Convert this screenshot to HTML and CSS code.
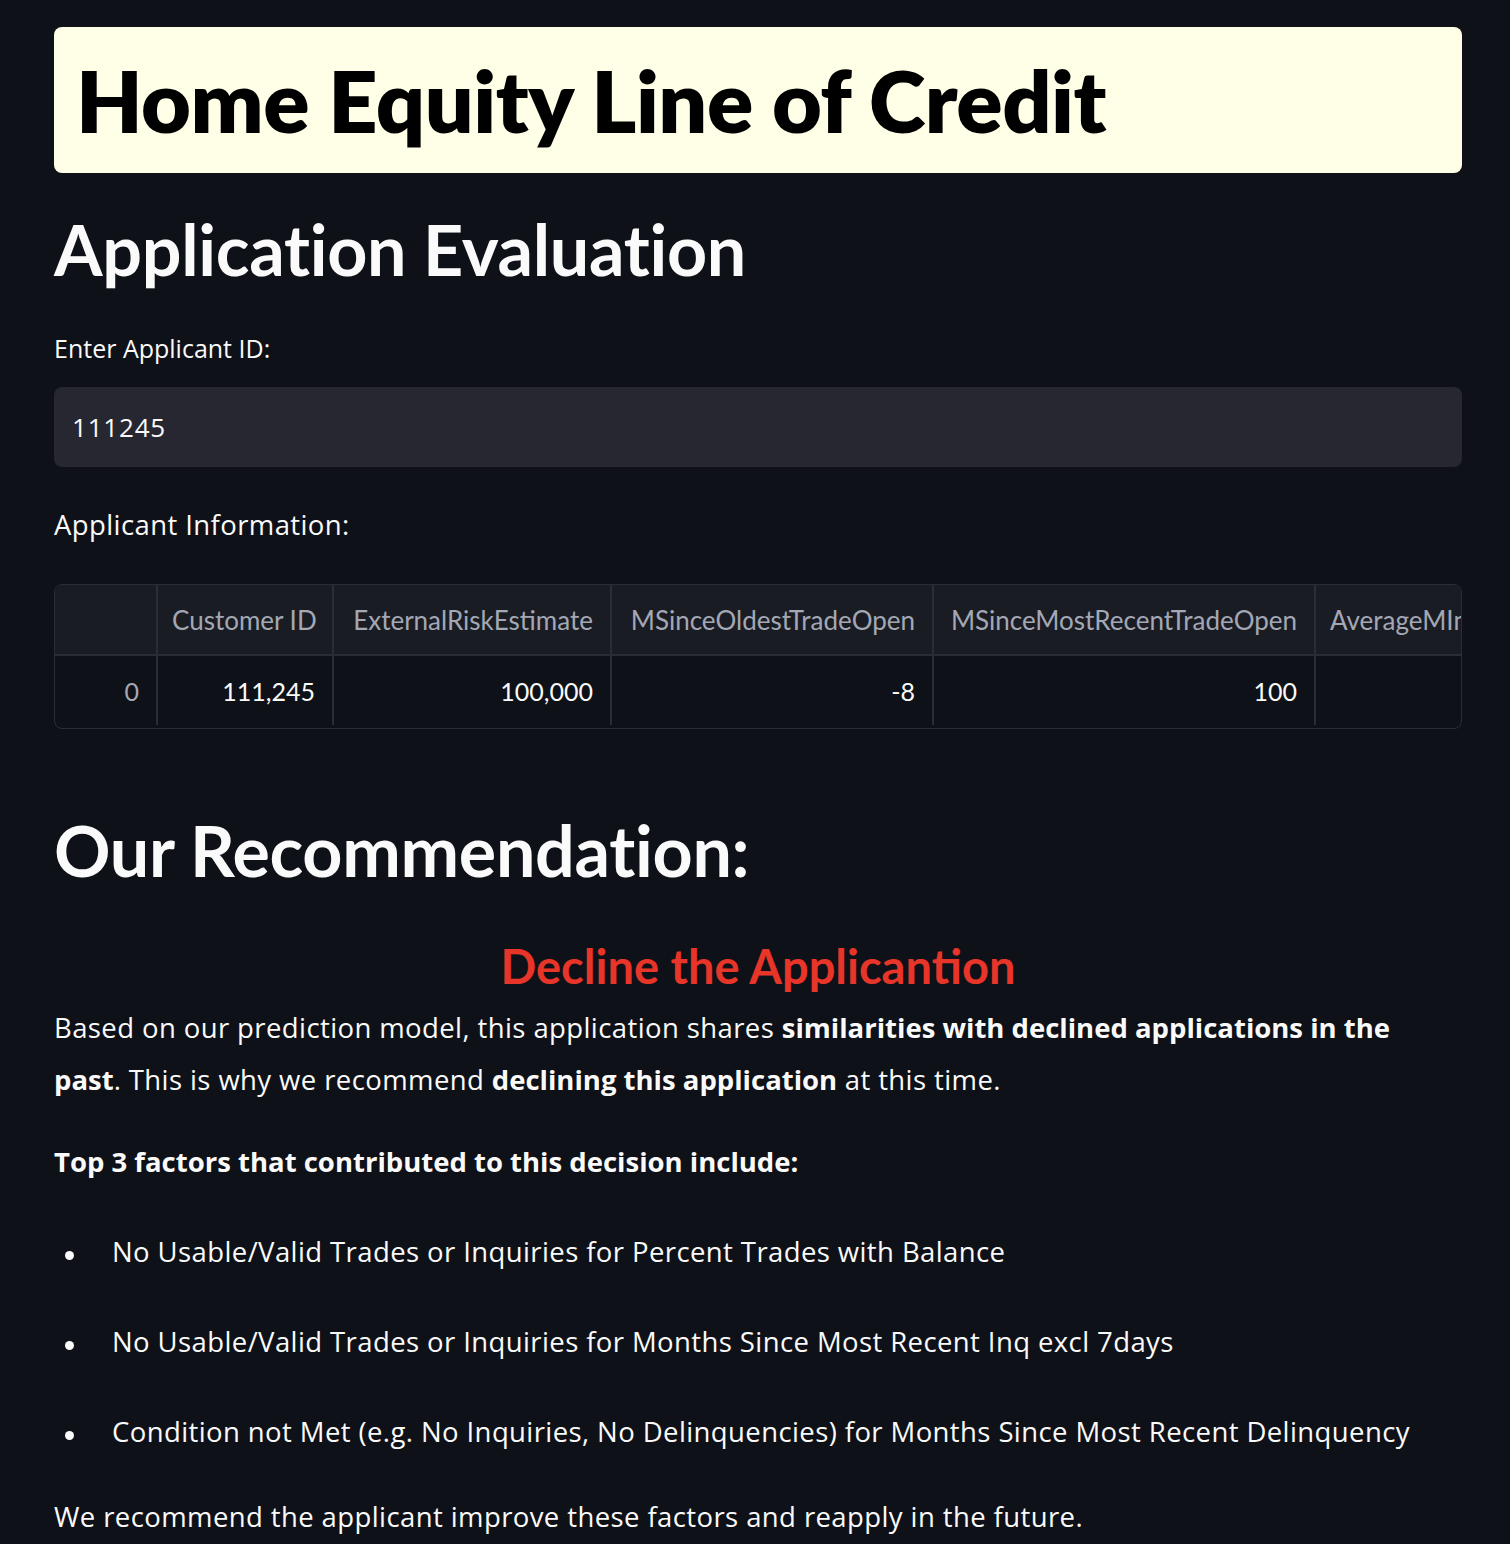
FILE: index.html
```html
<!DOCTYPE html>
<html lang="en">
<head>
<meta charset="utf-8">
<title>Home Equity Line of Credit</title>
<link rel="stylesheet" href="styles.css">
</head>
<body>
<main class="page">
  <div class="title-box"><h1 class="title">Home Equity Line of Credit</h1></div>

  <h2 class="section-title">Application Evaluation</h2>

  <label class="field-label" for="applicant">Enter Applicant ID:</label>
  <div class="input-box"><input id="applicant" class="input" type="text" value="111245"></div>

  <p class="info-label">Applicant Information:</p>

  <div class="grid-wrap">
    <table class="grid">
      <colgroup>
        <col class="c0"><col class="c1"><col class="c2"><col class="c3"><col class="c4"><col class="c5">
      </colgroup>
      <thead>
        <tr>
          <th></th>
          <th>Customer ID</th>
          <th>ExternalRiskEstimate</th>
          <th>MSinceOldestTradeOpen</th>
          <th>MSinceMostRecentTradeOpen</th>
          <th class="last">AverageMInFile</th>
        </tr>
      </thead>
      <tbody>
        <tr>
          <td class="idx">0</td>
          <td>111,245</td>
          <td>100,000</td>
          <td>-8</td>
          <td>100</td>
          <td></td>
        </tr>
      </tbody>
    </table>
  </div>

  <h2 class="section-title rec">Our Recommendation:</h2>

  <h3 class="verdict">Decline the Applicantion</h3>

  <p class="text">Based on our prediction model, this application shares <strong>similarities with declined applications in the past</strong>. This is why we recommend <strong>declining this application</strong> at this time.</p>

  <p class="text factors"><strong>Top 3 factors that contributed to this decision include:</strong></p>

  <ul class="list">
    <li>No Usable/Valid Trades or Inquiries for Percent Trades with Balance</li>
    <li>No Usable/Valid Trades or Inquiries for Months Since Most Recent Inq excl 7days</li>
    <li>Condition not Met (e.g. No Inquiries, No Delinquencies) for Months Since Most Recent Delinquency</li>
  </ul>

  <p class="text closing">We recommend the applicant improve these factors and reapply in the future.</p>
</main>
</body>
</html>
```

FILE: styles.css
```css
html, body {
  margin: 0;
  padding: 0;
  background: #0e1117;
  color: #fafafa;
  font-family: "Lato", "Noto Sans", "Liberation Sans", sans-serif;
}

.page {
  padding: 27px 48px 0 54px;
  box-sizing: border-box;
  width: 1510px;
  height: 1544px;
  overflow: hidden;
}

.title-box {
  background: #fffee6;
  border-radius: 8px;
  height: 146px;
  display: flex;
  align-items: center;
  padding: 0 22px;
}

.title {
  margin: 0;
  color: #000;
  font-size: 86px;
  font-weight: 800;
  line-height: 1;
  letter-spacing: -0.5px;
}

.section-title {
  margin: 34px 0 0;
  font-size: 70px;
  font-weight: 700;
  line-height: 1.2;
  letter-spacing: -0.3px;
}

.field-label {
  display: block;
  margin-top: 42px;
  font-family: "Open Sans", "Noto Sans", sans-serif;
  font-size: 25px;
  line-height: 30px;
}

.input-box {
  margin-top: 24px;
  background: #262730;
  border-radius: 8px;
  height: 80px;
  display: flex;
  align-items: center;
}

.input {
  flex: 1;
  background: transparent;
  border: 0;
  outline: none;
  color: #fafafa;
  font-family: "Open Sans", "Noto Sans", sans-serif;
  font-size: 26px;
  letter-spacing: 0.8px;
  padding: 0 18px;
}

.info-label {
  margin: 42px 0 0;
  font-family: "Open Sans", "Noto Sans", sans-serif;
  font-size: 27.5px;
  letter-spacing: 0.4px;
  line-height: 32px;
}

.grid-wrap {
  margin-top: 43px;
  border: 1px solid #2b2d34;
  border-radius: 8px;
  overflow: hidden;
  height: 143px;
}

.grid {
  border-collapse: collapse;
  table-layout: fixed;
  width: 1540px;
}

.c0 { width: 102px; }
.c1 { width: 176px; }
.c2 { width: 278px; }
.c3 { width: 322px; }
.c4 { width: 382px; }
.c5 { width: 280px; }

.grid th,
.grid td {
  padding: 0 17px 0 14px;
  text-align: right;
  white-space: nowrap;
  overflow: hidden;
  border-left: 2px solid #2b2d34;
  box-sizing: border-box;
}

.grid th:first-child,
.grid td:first-child {
  border-left: 0;
}

.grid th {
  height: 70px;
  background: #1a1c24;
  color: #a3a8b4;
  font-size: 26px;
  font-weight: 400;
  border-bottom: 2px solid #2b2d34;
}

.grid th.last {
  text-align: left;
}

.grid td {
  height: 70px;
  color: #fafafa;
  font-size: 25px;
}

.grid td.idx {
  color: #a3a8b4;
}

.rec {
  margin-top: 79px;
}

.verdict {
  margin: 46px 0 0;
  text-align: center;
  color: #e8352a;
  font-size: 47px;
  font-weight: 700;
  line-height: 1.2;
}

.text {
  margin: 8px 0 0;
  font-family: "Open Sans", "Noto Sans", sans-serif;
  font-size: 27.5px;
  letter-spacing: 0.4px;
  line-height: 52px;
}

.text strong {
  font-weight: 700;
  letter-spacing: 0;
}

.factors {
  margin-top: 30px;
}

.list {
  margin: 38px 0 0;
  padding-left: 58px;
  list-style: none;
  font-family: "Open Sans", "Noto Sans", sans-serif;
  font-size: 27.5px;
  letter-spacing: 0.4px;
  line-height: 52px;
}

.list li {
  margin-bottom: 38px;
}

.list li::before {
  content: "";
  display: inline-block;
  width: 9px;
  height: 9px;
  border-radius: 50%;
  background: #fafafa;
  margin-left: -47px;
  margin-right: 38px;
  vertical-align: 0.1em;
}

.closing {
  margin-top: -5px;
}
```
